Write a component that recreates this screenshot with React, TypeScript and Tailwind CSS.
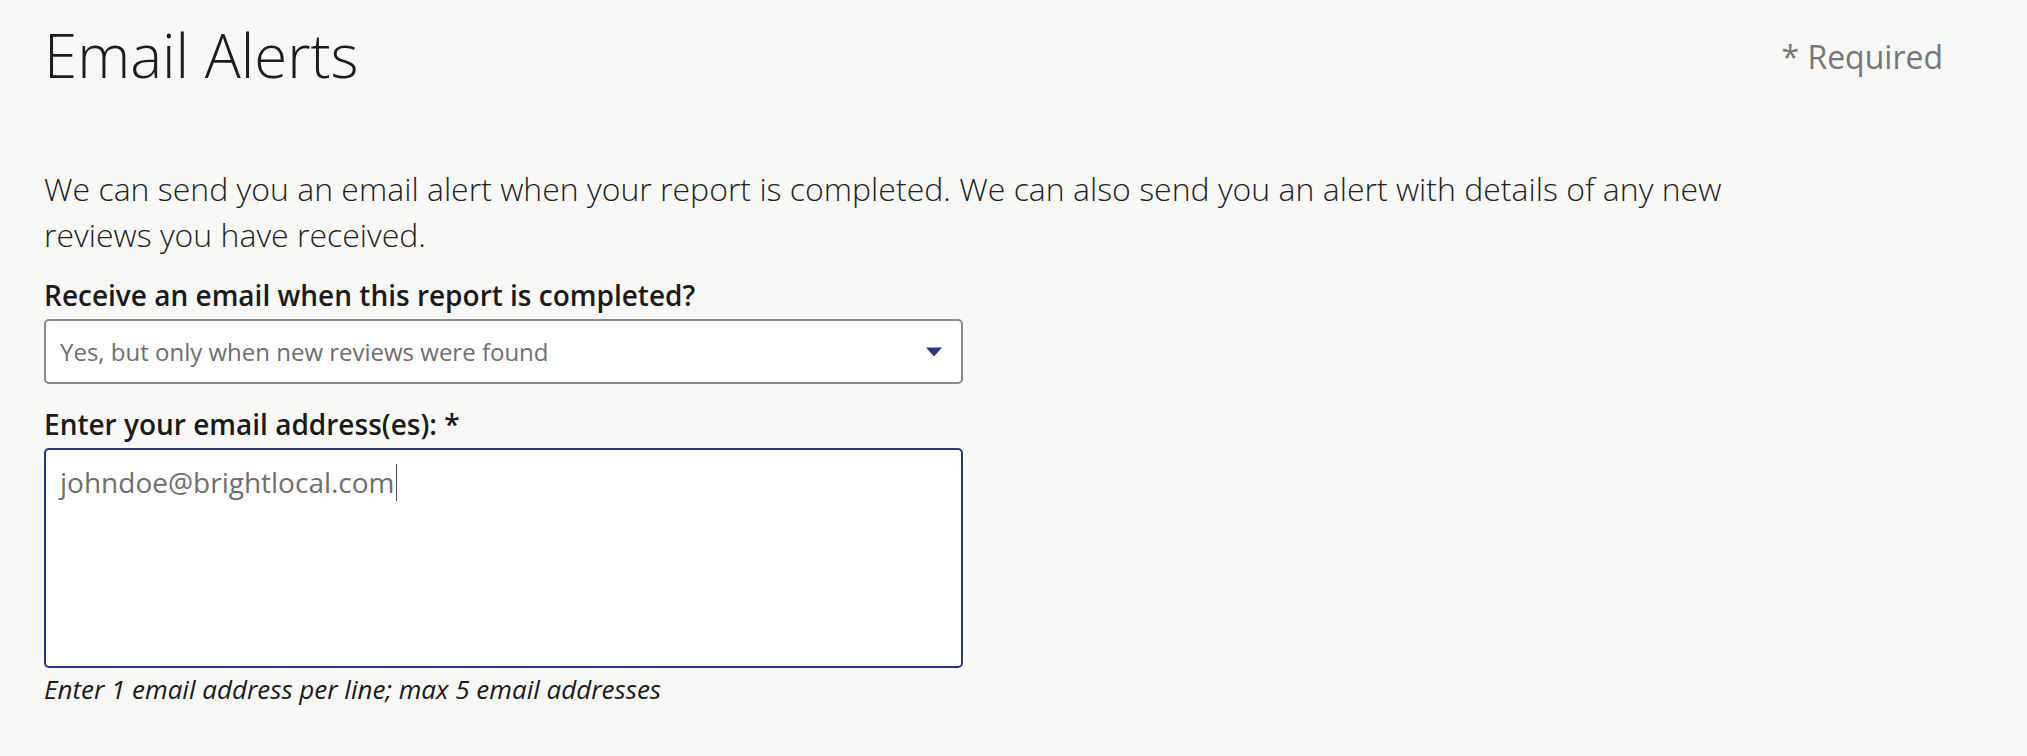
import { useState } from 'react';

const font = { fontFamily: '"Open Sans", "Noto Sans", sans-serif' };

function SelectField({ value }: { value: string }) {
  return (
    <div className="mt-[8px] flex h-[65px] w-[919px] items-center justify-between rounded-[5px] border-2 border-[#8a8a8a] bg-white pl-[14px] pr-[19px]">
      <span className="text-[24px] leading-[32px] text-[#6e6e6e]">{value}</span>
      <svg width="16" height="10" viewBox="0 0 16 10" className="shrink-0">
        <path d="M0 0.5 H16 L8 9.5 Z" fill="#2f3384" />
      </svg>
    </div>
  );
}

export default function App() {
  const [emails] = useState('johndoe@brightlocal.com');

  return (
    <div style={font} className="min-h-[756px] bg-[#f8f8f7] pl-[44px] pr-[84px] pt-[24px]">
      <div className="flex items-start justify-between">
        <h1 className="text-[60px] font-light leading-[62px] text-[#1c1c1c]">Email Alerts</h1>
        <span className="mt-[17px] text-[32px] leading-[32px] text-[#777777]">* Required</span>
      </div>

      <p className="mt-[80px] max-w-[1760px] text-[32px] font-light leading-[46px] text-[#1f1f1f]">
        We can send you an email alert when your report is completed. We can also send you an alert with
        details of any new reviews you have received.
      </p>

      <div className="mt-[21px]">
        <label className="block text-[28px] font-semibold leading-[32px] text-[#1a1a1a]">
          Receive an email when this report is completed?
        </label>
        <SelectField value="Yes, but only when new reviews were found" />
      </div>

      <div className="mt-[24px]">
        <label className="block text-[28px] font-semibold leading-[32px] text-[#1a1a1a]">
          Enter your email address(es): *
        </label>
        <div className="mt-[8px] h-[220px] w-[919px] rounded-[5px] border-2 border-[#2f3384] bg-white px-[14px] pt-[14px] leading-[36px]">
          <span className="text-[28px] leading-[36px] text-[#6e6e6e]">{emails}</span>
          <span className="ml-[1px] inline-block h-[37px] w-[1.5px] bg-[#555555] align-top" />
        </div>
        <p className="mt-[5px] text-[26px] italic leading-[32px] text-[#1a1a1a]">
          Enter 1 email address per line; max 5 email addresses
        </p>
      </div>
    </div>
  );
}
